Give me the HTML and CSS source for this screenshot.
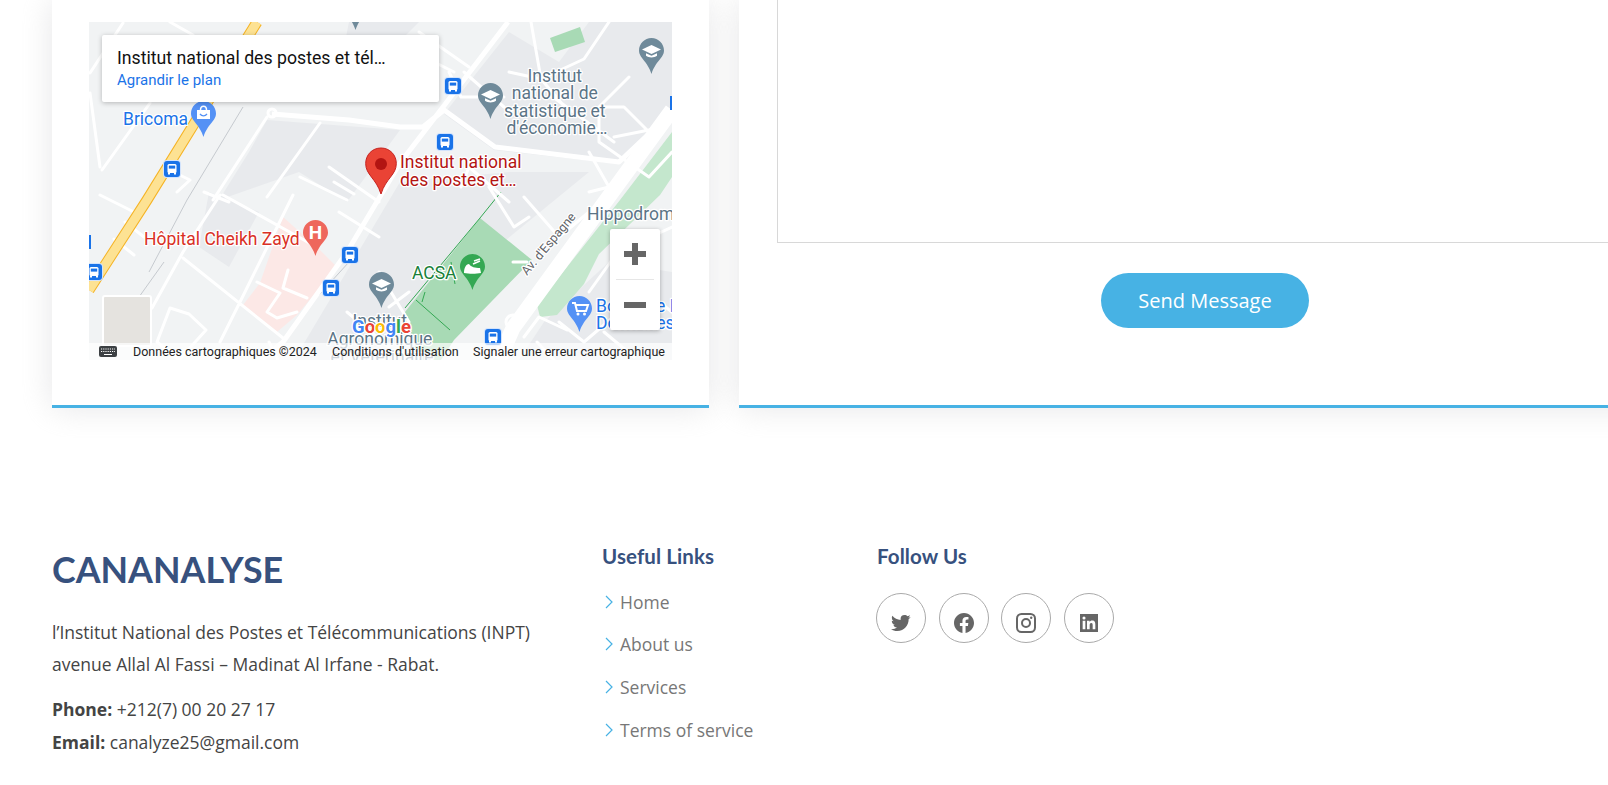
FILE: index.html
```html
<!DOCTYPE html>
<html lang="fr">
<head>
    <meta charset="UTF-8">
    <title>Cananalyse</title>
    <link rel="stylesheet" href="styles.css">
</head>
<body>
    <section class="contact">
        <div class="card map-card">
            <div class="map">
                <svg class="map-svg" width="583" height="338" viewBox="0 0 583 338">
                    <defs>
                        <path id="pin" d="M12.5 0C5.6 0 0 5.6 0 12.5 0 20 8.5 23 12.5 36 16.5 23 25 20 25 12.5 25 5.6 19.4 0 12.5 0Z"/>
                        <g id="bus">
                            <rect x="-1" y="-1" width="18" height="18" rx="4" fill="#d2e3fc"/>
                            <rect width="16" height="16" rx="3" fill="#1a73e8"/>
                            <rect x="3.5" y="3" width="9" height="9" rx="1.5" fill="#fff"/>
                            <rect x="4.8" y="4.6" width="6.4" height="3" fill="#1a73e8"/>
                            <rect x="4" y="11.5" width="2" height="2" fill="#fff"/>
                            <rect x="10" y="11.5" width="2" height="2" fill="#fff"/>
                        </g>
                        <g id="cap">
                            <path d="M12.5 7 22 11.5 12.5 16 3 11.5Z" fill="#fff"/>
                            <path d="M7 15.2v2.6c3 2.2 8 2.2 11 0v-2.6l-5.500 2.600Z" fill="#fff"/>
                        </g>
                    </defs>

                    <rect class="land" width="583" height="338"/>

                    <!-- darker blocks -->
                    <path class="block" d="M178 98 311 108 258 180 210 150 130 178 160 130Z"/>
                    <path class="block" d="M355 92 405 128 530 142 583 95V0H500L470 40 420 10Z"/>
                    <path class="block" d="M311 160 420 150 500 150 390 240 300 320 250 338H205Z"/>
                    <path class="block" d="M120 170 170 190 140 245 110 225Z"/>
                    <path class="block" d="M260 0H330L290 40 255 25Z"/>
                    <path class="block" d="M455 300 520 240 583 250V338H430Z"/>

                    <!-- parks and hospital -->
                    <path class="park" d="M461 16 491 5 496 20 466 30Z"/>
                    <path class="park" d="M391 196 443 238 365 318 352 338H330L316 290Z"/>
                    <path class="park-light" d="M583 110 531 178 448 283 451 295 468 293 495 262 510 232 571 173 583 155Z"/>
                    <path class="hospital" d="M194 195 231 228 248 245 208 293 188 310 154 283 171 261Z"/>

                    <!-- thin lines -->
                    <path class="rail" d="M154 85 98 178 60 250M230 273 260 240M75 240 50 275"/>
                    <path class="green-line" d="M316 286 391 196 412 170M327 278 361 308M336 270 333 280M362 240 366 262"/>

                    <!-- small roads -->
                    <path class="road" d="M34 1 1 51M81 0 104 13M1 71 11 145M61 81 13 148M178 95 124 178M231 101 178 175M74 145 101 158 88 170M211 155 258 178M131 173 94 230 63 286M94 236 194 316M204 173 151 280 131 320M134 173 224 223M81 286 100 292 117 308 90 338 68 320ZM11 173 45 190M36 200 55 215M25 217 45 233M115 170 140 180M240 145 290 180M245 160 265 172M250 190 290 215M199 248 194 266 218 276M168 260 191 271 178 290 188 296 208 290"/>
                    <path class="road" d="M330 10 380 45M345 40 365 50M300 70 335 60M360 50 372 75 415 75M375 50 415 85M442 0 452 57M452 57 495 37 520 0M420 50 452 57 480 90M460 72 525 120M540 55 510 85 510 120 560 155M560 155 583 130M510 85 535 85 560 110M525 115 575 105M500 130 520 165 500 170M372 165 380 145 420 180M400 165 425 205 440 195M424 240 438 240M435 175 470 215 500 190M290 250 320 300M180 320 190 340M258 290 300 325M300 285 320 270M470 300 495 320 530 290M435 315 450 295 478 308M448 320 465 338M515 310 545 335M500 270 525 235M540 225 583 205M545 260 583 290"/>
                    <!-- main roads -->
                    <path class="road-main" d="M183 92 260 98 311 105 334 105 355 88 406 125 530 140 583 90M419 0 354 85 311 141 258 230 194 320 172 338"/>
                    <path class="road-wide" d="M583 88 521 173 424 306 410 338"/>
                    <path class="road-halo" d="M168 0 58 178 0 268"/>
                    <path class="road-yellow" d="M168 0 58 178 0 268"/>
                    <circle class="round" cx="183" cy="91" r="4"/>
                    <circle class="round" cx="424" cy="300" r="7"/>

                    <!-- labels -->
                    <text class="label school" text-anchor="middle">
                        <tspan x="468" y="60">Institut</tspan>
                        <tspan x="468" y="77">national de</tspan>
                        <tspan x="468" y="95">statistique et</tspan>
                        <tspan x="468" y="112">d'économie…</tspan>
                    </text>
                    <text class="label school" text-anchor="middle">
                        <tspan x="293" y="305">Institut</tspan>
                        <tspan x="293" y="323">Agronomique</tspan>
                        <tspan x="293" y="341">et Vétérinaire</tspan>
                    </text>
                    <text class="label school" x="498" y="198">Hippodrome</text>
                    <text class="label shop" x="34" y="103">Bricoma</text>
                    <text class="label shop">
                        <tspan x="507" y="290">Boutique L</tspan>
                        <tspan x="507" y="307">Domaines</tspan>
                    </text>
                    <text class="label place">
                        <tspan x="311" y="146">Institut national</tspan>
                        <tspan x="311" y="164">des postes et…</tspan>
                    </text>
                    <text class="label health" x="55" y="223">Hôpital Cheikh Zayd</text>
                    <text class="label leisure" x="323" y="257">ACSA</text>
                    <text class="label street" transform="translate(438 254) rotate(-50)">Av. d'Espagne</text>

                    <!-- pins -->
                    <use href="#pin" class="pin-school" x="254" y="-28"/>
                    <g transform="translate(550 16)"><use href="#pin" class="pin-school"/><use href="#cap"/></g>
                    <g transform="translate(389 61)"><use href="#pin" class="pin-school"/><use href="#cap"/></g>
                    <g transform="translate(280 250)"><use href="#pin" class="pin-school"/><use href="#cap"/></g>
                    <g transform="translate(102 79)">
                        <use href="#pin" class="pin-shop"/>
                        <path d="M6 9h13v9H6Z" fill="#fff"/>
                        <path d="M9.500 9c0-5 6-5 6 0" fill="none" stroke="#fff" stroke-width="1.500"/>
                        <path d="M9 13c2 2.500 5 2.500 7 0" fill="none" stroke="#5491f5" stroke-width="1.300"/>
                    </g>
                    <g transform="translate(478 274)">
                        <use href="#pin" class="pin-shop"/>
                        <path d="M5 7h3l2 8h9l2-6H9" fill="none" stroke="#fff" stroke-width="2"/>
                        <circle cx="11" cy="18" r="1.500" fill="#fff"/>
                        <circle cx="17.500" cy="18" r="1.500" fill="#fff"/>
                    </g>
                    <g transform="translate(214 198)">
                        <use href="#pin" class="pin-health"/>
                        <text class="pin-h" x="12.500" y="19" text-anchor="middle">H</text>
                    </g>
                    <g transform="translate(371 232)">
                        <use href="#pin" class="pin-park"/>
                        <path d="M4 19c0-5 2-9 5-9 2 3 6 4 11 4l1 5c-5 1-12 1-17 0Z" fill="#fff"/>
                        <path d="M13 10l7-3M14 7l6-2" stroke="#fff" stroke-width="1.500"/>
                    </g>
                    <g transform="translate(276 126)">
                        <path class="marker" d="M16 0C7.200 0 .7 6.800.7 15.500.7 27 11 30 16 46 21 30 31.300 27 31.300 15.500 31.300 6.800 24.800 0 16 0Z"/>
                        <circle cx="16" cy="16" r="6" fill="#b31412"/>
                    </g>

                    <!-- bus stops -->
                    <use href="#bus" x="75" y="139"/>
                    <use href="#bus" x="356" y="56"/>
                    <use href="#bus" x="348" y="112"/>
                    <use href="#bus" x="253" y="225"/>
                    <use href="#bus" x="234" y="258"/>
                    <use href="#bus" x="-3" y="242"/>
                    <use href="#bus" x="396" y="307"/>
                    <rect x="581" y="74" width="2" height="14" fill="#1a73e8"/>
                    <rect y="213" width="2" height="14" fill="#1a73e8"/>

                    <!-- google logo -->
                    <text class="google" x="263" y="311"><tspan fill="#4285f4">G</tspan><tspan fill="#ea4335">o</tspan><tspan fill="#fbbc04">o</tspan><tspan fill="#4285f4">g</tspan><tspan fill="#34a853">l</tspan><tspan fill="#ea4335">e</tspan></text>

                    <!-- thumbnail and attribution -->
                    <rect class="thumb" x="14" y="274" width="48" height="50" rx="2"/>
                    <rect class="attrib" y="321" width="583" height="17"/>
                    <g transform="translate(10 324)">
                        <rect width="18" height="11" rx="2" fill="#3c4043"/>
                        <path d="M2 3h14M2 5.500h14" stroke="#fff" stroke-width="1" stroke-dasharray="1.200 1"/>
                        <path d="M5 8.500h8" stroke="#fff" stroke-width="1"/>
                    </g>
                    <text class="attrib-text" x="44" y="334">Données cartographiques ©2024</text>
                    <text class="attrib-text" x="243" y="334">Conditions d'utilisation</text>
                    <text class="attrib-text" x="384" y="334">Signaler une erreur cartographique</text>
                </svg>

                <div class="map-info">
                    <div class="map-title">Institut national des postes et tél…</div>
                    <a class="map-link" href="#">Agrandir le plan</a>
                </div>

                <div class="map-zoom">
                    <button class="zoom-btn"><span class="zoom-plus"></span></button>
                    <div class="zoom-sep"></div>
                    <button class="zoom-btn"><span class="zoom-minus"></span></button>
                </div>
            </div>
        </div>

        <form class="card form-card">
            <textarea class="message"></textarea>
            <button class="send" type="button">Send Message</button>
        </form>
    </section>

    <footer class="footer">
        <div class="footer-info">
            <h3 class="brand">CANANALYSE</h3>
            <p class="address">l’Institut National des Postes et Télécommunications (INPT)<br>avenue Allal Al Fassi – Madinat Al Irfane - Rabat.</p>
            <p class="details"><strong>Phone:</strong> +212(7) 00 20 27 17<br><strong>Email:</strong> canalyze25@gmail.com</p>
        </div>

        <div class="footer-links">
            <h4 class="footer-title">Useful Links</h4>
            <ul class="link-list">
                <li><svg class="chevron" viewBox="0 0 8 14"><path d="M1 1l6 6-6 6"/></svg><a href="#">Home</a></li>
                <li><svg class="chevron" viewBox="0 0 8 14"><path d="M1 1l6 6-6 6"/></svg><a href="#">About us</a></li>
                <li><svg class="chevron" viewBox="0 0 8 14"><path d="M1 1l6 6-6 6"/></svg><a href="#">Services</a></li>
                <li><svg class="chevron" viewBox="0 0 8 14"><path d="M1 1l6 6-6 6"/></svg><a href="#">Terms of service</a></li>
            </ul>
        </div>

        <div class="footer-social">
            <h4 class="footer-title">Follow Us</h4>
            <div class="social-row">
                <a class="social" href="#"><svg viewBox="0 0 24 24" width="24" height="24"><path d="M19.633 7.997c.013.175.013.349.013.523 0 5.325-4.053 11.461-11.46 11.461-2.282 0-4.402-.661-6.186-1.809.324.037.636.05.973.05a8.07 8.07 0 0 0 5.001-1.721 4.036 4.036 0 0 1-3.767-2.793c.249.037.499.062.761.062.361 0 .724-.05 1.061-.137a4.027 4.027 0 0 1-3.23-3.953v-.05c.537.299 1.16.486 1.82.511a4.022 4.022 0 0 1-1.796-3.354c0-.748.199-1.434.548-2.032a11.457 11.457 0 0 0 8.306 4.215c-.062-.3-.1-.611-.1-.923a4.026 4.026 0 0 1 4.028-4.028c1.16 0 2.207.486 2.943 1.272a7.957 7.957 0 0 0 2.556-.973 4.02 4.02 0 0 1-1.771 2.22 8.073 8.073 0 0 0 2.319-.624 8.645 8.645 0 0 1-2.019 2.083z"/></svg></a>
                <a class="social" href="#"><svg viewBox="0 0 24 24" width="24" height="24"><path d="M12.001 2.002c-5.522 0-9.999 4.477-9.999 9.999 0 4.99 3.656 9.126 8.437 9.879v-6.988h-2.54v-2.891h2.54V9.798c0-2.508 1.493-3.891 3.776-3.891 1.094 0 2.24.195 2.24.195v2.459h-1.264c-1.24 0-1.628.772-1.628 1.563v1.875h2.771l-.443 2.891h-2.328v6.988C18.344 21.129 22 16.992 22 12.001c0-5.522-4.477-9.999-9.999-9.999z"/></svg></a>
                <a class="social" href="#"><svg viewBox="0 0 24 24" width="24" height="24"><rect class="insta" x="3" y="3" width="18" height="18" rx="4.500"/><circle class="insta" cx="12" cy="12" r="4"/><circle cx="17.200" cy="6.800" r="1.200"/></svg></a>
                <a class="social" href="#"><svg viewBox="0 0 24 24" width="24" height="24"><path d="M21 3H3v18h18V3zM8.339 18.337H5.667v-8.59h2.672v8.59zM7.003 8.574a1.548 1.548 0 1 1 0-3.096 1.548 1.548 0 0 1 0 3.096zm11.335 9.763h-2.669V14.16c0-.996-.018-2.277-1.388-2.277-1.39 0-1.601 1.086-1.601 2.207v4.248h-2.667v-8.59h2.56v1.174h.037c.355-.675 1.227-1.387 2.524-1.387 2.704 0 3.203 1.778 3.203 4.092v4.71z"/></svg></a>
            </div>
        </div>
    </footer>
</body>
</html>
```

FILE: styles.css
```css
html, body {
    height: 785px;
    overflow: hidden;
}
body {
    margin: 0;
    background: #fff;
    font-family: "Open Sans", sans-serif;
    color: #444;
}

/* cards */
.contact {
    display: grid;
    grid-template-columns: 657px 1000px;
    column-gap: 30px;
    padding-left: 52px;
}
.card {
    height: 408px;
    box-sizing: border-box;
    background: #fff;
    border-bottom: 3px solid #47b2e4;
    box-shadow: 0 0 30px rgba(214, 215, 216, 0.6);
}
.map-card {
    padding: 22px 37px 0;
}
.form-card {
    padding-left: 38px;
}

/* map */
.map {
    position: relative;
    width: 583px;
    height: 338px;
    overflow: hidden;
}
.map-svg {
    display: block;
}
.land { fill: #f1f3f4; }
.block { fill: #e8eaed; }
.park { fill: #a8dab5; }
.park-light { fill: #c4e7cd; }
.hospital { fill: #fce8e6; }
.rail { fill: none; stroke: #c6cacf; stroke-width: 1; }
.green-line { fill: none; stroke: #34a853; stroke-width: 1; }
.road { fill: none; stroke: #fff; stroke-width: 3; stroke-linecap: round; stroke-linejoin: round; }
.road-main { fill: none; stroke: #fff; stroke-width: 5; stroke-linejoin: round; }
.road-wide { fill: none; stroke: #fff; stroke-width: 15; }
.road-halo { fill: none; stroke: #f5b324; stroke-width: 11; }
.road-yellow { fill: none; stroke: #fde293; stroke-width: 9; }
.round { fill: none; stroke: #fff; stroke-width: 3; }

.label {
    font-family: Roboto, sans-serif;
    font-size: 17.5px;
    paint-order: stroke;
    stroke: #fff;
    stroke-width: 2.5px;
    stroke-linejoin: round;
}
.school { fill: #5b7486; }
.shop { fill: #1a73e8; }
.place { fill: #b31412; }
.health { fill: #d93025; }
.leisure { fill: #188038; }
.street { fill: #5f6368; font-size: 12.5px; }

.pin-school { fill: #6f8a9a; }
.pin-shop { fill: #5491f5; }
.pin-health { fill: #ee675c; }
.pin-park { fill: #34a853; }
.pin-h {
    fill: #fff;
    font-family: Roboto, sans-serif;
    font-size: 19px;
    font-weight: 700;
}
.marker { fill: #ea4335; stroke: #c5221f; stroke-width: 1; }

.google {
    font-family: Roboto, sans-serif;
    font-size: 18.5px;
    font-weight: 700;
    paint-order: stroke;
    stroke: #fff;
    stroke-width: 2.5px;
}
.thumb { fill: #e5e3df; stroke: #fff; stroke-width: 2; }
.attrib { fill: rgba(255, 255, 255, 0.7); }
.attrib-text {
    font-family: Roboto, sans-serif;
    font-size: 12.5px;
    fill: #222;
}

.map-info {
    position: absolute;
    left: 13px;
    top: 13px;
    width: 337px;
    height: 67px;
    padding: 13px 15px 0;
    box-sizing: border-box;
    background: #fff;
    border-radius: 2px;
    box-shadow: 0 1px 5px rgba(0, 0, 0, 0.25);
    font-family: Roboto, sans-serif;
}
.map-title {
    font-size: 17.7px;
    font-weight: 400;
    line-height: 20px;
    color: #111;
}
.map-link {
    display: block;
    margin-top: 3px;
    font-size: 15px;
    line-height: 18px;
    color: #1a73e8;
    text-decoration: none;
}
.map-zoom {
    position: absolute;
    left: 521px;
    top: 207px;
    width: 50px;
    height: 101px;
    background: #fff;
    border-radius: 2px;
    box-shadow: 0 1px 4px rgba(0, 0, 0, 0.3);
}
.zoom-btn {
    display: flex;
    align-items: center;
    justify-content: center;
    width: 50px;
    height: 50px;
    padding: 0;
    border: 0;
    background: none;
}
.zoom-sep {
    height: 1px;
    margin: 0 6px;
    background: #e6e6e6;
}
.zoom-plus, .zoom-minus {
    display: block;
    width: 22px;
    height: 6px;
    background: #666;
}
.zoom-plus {
    position: relative;
}
.zoom-plus::after {
    content: "";
    position: absolute;
    left: 8px;
    top: -8px;
    width: 6px;
    height: 22px;
    background: #666;
}

/* form */
.message {
    display: block;
    width: 100%;
    height: 243px;
    padding: 0;
    box-sizing: border-box;
    border: 1px solid #d8d8d8;
    border-top: 0;
    border-radius: 0;
    resize: none;
}
.send {
    display: block;
    width: 208px;
    height: 55px;
    margin: 30px 0 0 324px;
    border: 0;
    border-radius: 50px;
    background: #47b2e4;
    color: #fff;
    font-family: "Open Sans", sans-serif;
    font-size: 20px;
}

/* footer */
.footer {
    display: grid;
    grid-template-columns: 550px 275px 1fr;
    padding: 139.5px 0 0 52px;
}
.brand {
    margin: 0 0 24px;
    font-family: Lato, sans-serif;
    font-size: 35.8px;
    line-height: 44px;
    font-weight: 700;
    color: #37517e;
}
.address {
    margin: 0 0 13px;
    font-size: 17.5px;
    line-height: 32px;
}
.details {
    margin: 0;
    font-size: 17.5px;
    line-height: 33px;
}
.footer-title {
    margin: -7px 0 10px;
    font-family: Lato, sans-serif;
    font-size: 20.5px;
    letter-spacing: 0.1px;
    line-height: 30px;
    font-weight: 700;
    color: #37517e;
}
.link-list {
    margin: 0;
    padding: 0;
    list-style: none;
}
.link-list li {
    display: flex;
    align-items: center;
    height: 42.6px;
    padding-left: 3px;
}
.link-list a {
    color: #777;
    font-size: 17.5px;
    text-decoration: none;
}
.chevron {
    width: 8px;
    height: 14px;
    margin-right: 7px;
    fill: none;
    stroke: #47b2e4;
    stroke-width: 1.2;
}
.social-row {
    display: flex;
    gap: 12.6px;
    margin: 22px 0 0 -1px;
}
.social {
    display: flex;
    align-items: center;
    justify-content: center;
    width: 50px;
    height: 50px;
    padding-top: 10px;
    box-sizing: border-box;
    border: 1px solid #aaa;
    border-radius: 50%;
    fill: #666;
}
.insta {
    fill: none;
    stroke: #666;
    stroke-width: 2;
}
```
